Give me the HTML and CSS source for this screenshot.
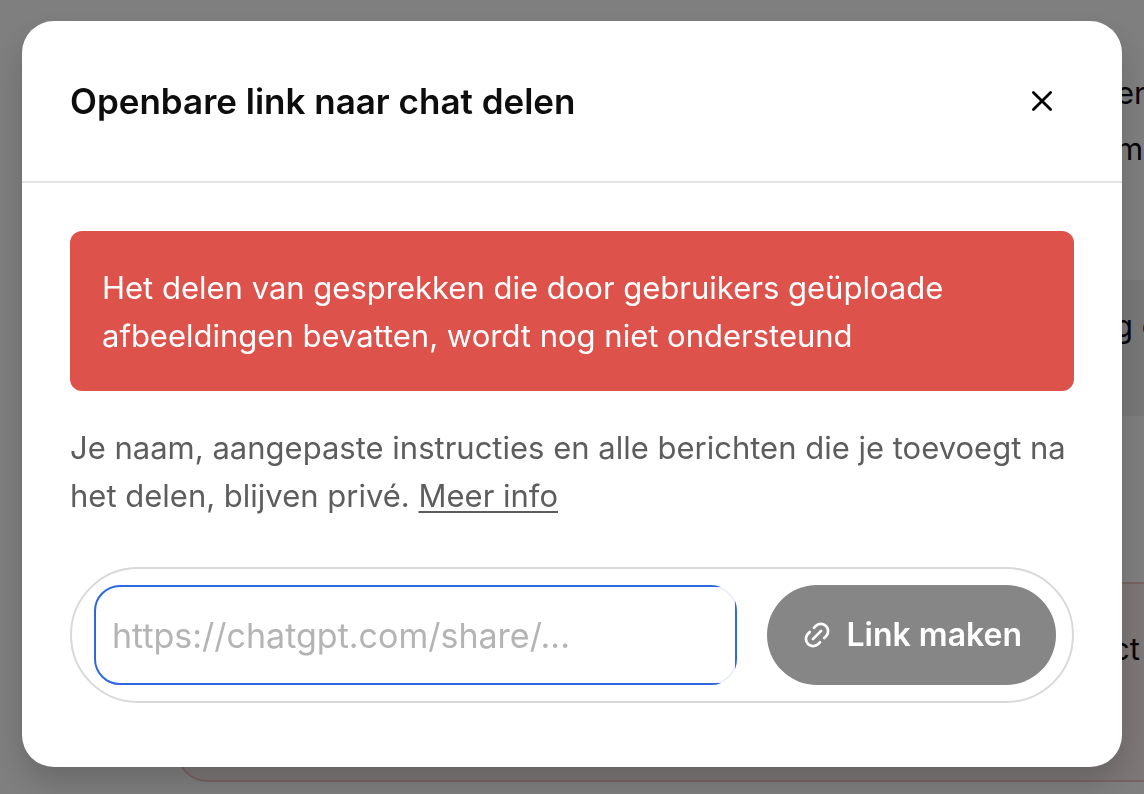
FILE: index.html
```html
<!DOCTYPE html>
<html lang="nl">
<head>
<meta charset="utf-8">
<meta name="viewport" content="width=device-width, initial-scale=1">
<title>Openbare link naar chat delen</title>
<link rel="stylesheet" href="styles.css">
</head>
<body>
<main class="chat" aria-hidden="true">
  <div class="reply"><p>en</p><p>m</p></div>
  <div class="bubble"><p>g c</p></div>
  <div class="notice"><p>ct</p></div>
</main>
<div class="overlay">
  <section class="dialog" role="dialog" aria-modal="true" aria-labelledby="dialog-title">
    <header class="dialog-header">
      <h1 class="dialog-title" id="dialog-title">Openbare link naar chat delen</h1>
      <button class="close" type="button" aria-label="Sluiten">
        <svg viewBox="0 0 24 24" width="24" height="24" fill="none" stroke="currentColor" stroke-width="2.8" stroke-linecap="round"><path d="M3.4 3.400 20.6 20.6M20.6 3.400 3.400 20.6"/></svg>
      </button>
    </header>
    <div class="dialog-body">
      <div class="alert" role="alert">Het delen van gesprekken die door gebruikers geüploade afbeeldingen bevatten, wordt nog niet ondersteund</div>
      <p class="info">Je naam, aangepaste instructies en alle berichten die je toevoegt na het delen, blijven privé. <a class="more" href="#">Meer info</a></p>
      <form class="share">
        <div class="field"><input class="url" type="text" aria-label="Openbare link" placeholder="https://chatgpt.com/share/..." readonly></div>
        <button class="create" type="button">
          <svg viewBox="-1 -1 30 30" width="28" height="28" fill="none" stroke="currentColor" stroke-width="2.9" stroke-linecap="round"><path d="M10.800 6.200 13 4a7.800 7.800 0 0 1 11 11l-2.200 2.200M6.200 10.800 4 13a7.800 7.800 0 0 0 11 11l2.200-2.200M9.600 18.400l8.800-8.800"/></svg>
          <span>Link maken</span>
        </button>
      </form>
    </div>
  </section>
</div>
</body>
</html>
```
FILE: styles.css
```css
* { box-sizing: border-box; }

body {
  margin: 0;
  min-height: 100vh;
  overflow: hidden;
  font-family: Inter, "Liberation Sans", sans-serif;
  font-size: 31px;
  line-height: 48px;
  color: #0d0d0d;
  background: #fff;
}

p { margin: 0; }

.chat {
  height: 100vh;
  overflow: hidden;
  white-space: nowrap;
}

.chat p { margin-left: auto; width: 28px; }
.reply { height: 280px; padding-top: 65px; line-height: 56px; }
.bubble { height: 136px; margin-left: 50%; padding-top: 22px; background: #f0f0f0; }
.bubble p { width: 30px; }

.notice {
  height: 200px;
  margin: 166px -40px 0 176px;
  padding: 41px 42px 0 0;
  border: 2px solid #f0c8c5;
  border-radius: 32px;
  background: #fbf0ee;
}

.overlay {
  position: fixed;
  inset: 0;
  padding: 21px 22px 27px;
  background: rgba(0, 0, 0, 0.5);
}

.dialog {
  border-radius: 32px;
  background: #fff;
  box-shadow: 0 16px 32px rgba(0, 0, 0, 0.18);
}

.dialog-header {
  display: flex;
  align-items: center;
  justify-content: space-between;
  padding: 56px 68px 56px 48px;
  border-bottom: 2px solid #e3e3e3;
}

.dialog-title {
  margin: 0;
  font-size: 35px;
  line-height: 48px;
  font-weight: 600;
}

.close {
  display: flex;
  padding: 0;
  border: 0;
  background: none;
  color: #000;
}

.dialog-body { padding: 48px 48px 64px; }

.alert {
  padding: 33px 32px 31px;
  border-radius: 12px;
  background: #de524c;
  color: #fff;
}

.info { margin-top: 33px; color: #5d5d5d; }
.more { color: inherit; text-decoration-thickness: 2px; text-underline-offset: 4px; }

.share {
  display: flex;
  align-items: center;
  gap: 30px;
  margin-top: 47px;
  padding: 16px 16px 16px 22px;
  border: 2px solid #d9d9d9;
  border-radius: 68px;
}

.field {
  position: relative;
  flex: 1;
  min-width: 0;
}

/* fades long links out before the right edge */
.field::after {
  content: "";
  position: absolute;
  inset: 2px 2px 2px auto;
  width: 80px;
  background: linear-gradient(to right, rgba(255, 255, 255, 0), rgba(255, 255, 255, 0.9) 75%);
  pointer-events: none;
}

.url {
  display: block;
  width: 100%;
  height: 100px;
  padding: 0 16px;
  border: 2px solid #2f68de;
  border-radius: 26px;
  outline: 0;
  background: #fff;
  color: #0d0d0d;
  font: inherit;
  font-size: 34px;
}

.url::placeholder { color: #b4b4b4; opacity: 1; }

.create {
  display: flex;
  align-items: center;
  gap: 15px;
  height: 100px;
  padding: 0 34px 0 36px;
  border: 0;
  border-radius: 50px;
  background: #868686;
  color: #fff;
  font: inherit;
  font-size: 32px;
  font-weight: 600;
  white-space: nowrap;
}
```
